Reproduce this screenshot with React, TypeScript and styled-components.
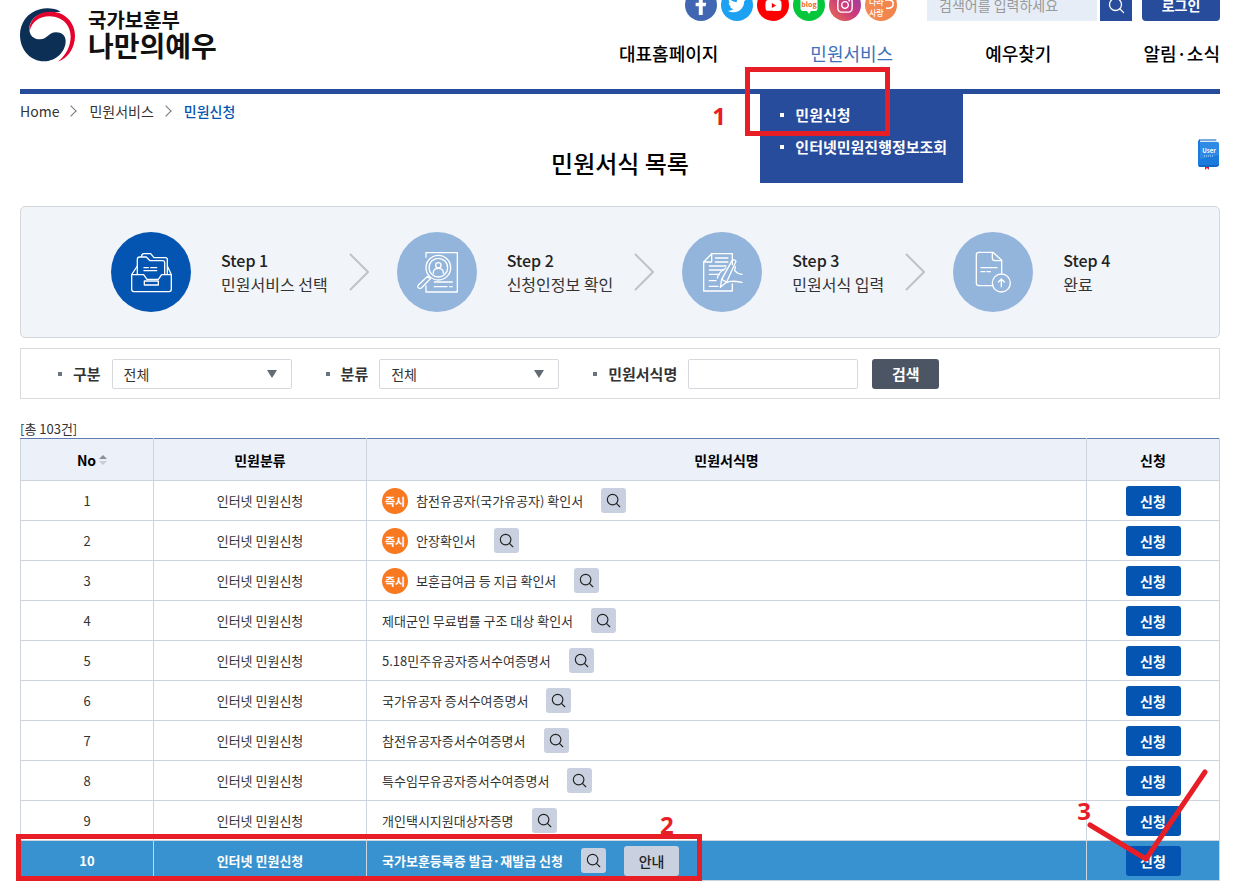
import React from "react";
import styled, { createGlobalStyle, css } from "styled-components";
import { FaFacebookF, FaTwitter, FaYoutube, FaInstagram } from "react-icons/fa";

const color = {
  brand: "#274c9b",
  action: "#0455b1",
  soft: "#93b4db",
  line: "#cdd4dd",
  text: "#333",
  mark: "#e81e26",
  chip: "#c9d0df",
};

const GlobalStyle = createGlobalStyle`
  *, *::before, *::after { box-sizing: border-box; }
  body {
    margin: 0;
    background: #fff;
    color: ${color.text};
    font-family: "Noto Sans CJK KR", "Noto Sans", sans-serif;
    font-size: 14px;
    line-height: 20px;
  }
  button, input, select { font: inherit; color: inherit; margin: 0; padding: 0; }
  button { border: 0; cursor: pointer; }
  a { color: inherit; text-decoration: none; }
  ul, ol { list-style: none; margin: 0; padding: 0; }
  svg { display: block; }
`;

const Page = styled.div`
  padding: 0 18px 0 20px;
`;

/* ---------- header ---------- */

const Header = styled.header`
  display: flex;
  justify-content: space-between;
  height: 94px;
  border-bottom: 5px solid ${color.brand};
`;

const Logo = styled.a`
  display: flex;
  align-items: flex-start;
  gap: 13px;
  padding-top: 8px;
  color: #111;
  font-weight: 700;
`;

const LogoText = styled.span`
  display: flex;
  flex-direction: column;
  font-size: 28px;
  line-height: 26px;
  small {
    font-size: 20px;
    line-height: 24px;
  }
`;

const HeaderSide = styled.div`
  display: flex;
  flex-direction: column;
  align-items: flex-end;
`;

const TopBar = styled.div`
  display: flex;
  align-items: flex-end;
  height: 21px;
  overflow: hidden;
`;

const SocialList = styled.ul`
  display: flex;
  gap: 4px;
  margin-right: 30px;
`;

const SocialLink = styled.a<{ $bg: string }>`
  display: grid;
  place-items: center;
  width: 32px;
  height: 32px;
  border-radius: 50%;
  background: ${(p) => p.$bg};
  color: #fff;
`;

const SearchForm = styled.form`
  display: flex;
  gap: 3px;
  margin-right: 10px;
`;

const SearchInput = styled.input`
  width: 170px;
  height: 32px;
  padding: 0 12px;
  border: 0;
  background: #e6edf6;
  &::placeholder { color: #999; opacity: 1; }
`;

const SearchButton = styled.button`
  display: grid;
  place-items: center;
  width: 32px;
  height: 32px;
  background: ${color.brand};
  color: #fff;
`;

const LoginButton = styled.button`
  width: 78px;
  height: 32px;
  border-radius: 4px;
  background: ${color.brand};
  color: #fff;
  font-weight: 700;
`;

const Nav = styled.nav`
  margin-top: 19px;
`;

const NavList = styled.ul`
  display: flex;
  gap: 92px;
  font-size: 18px;
  line-height: 26px;
  font-weight: 500;
  color: #000;
`;

const NavItem = styled.li<{ $active?: boolean }>`
  position: relative;
  white-space: nowrap;
  ${(p) => p.$active && css`> a { color: #3d71b8; font-weight: 400; }`}
`;

const SubMenu = styled.ul`
  position: absolute;
  z-index: 1;
  top: 54px;
  left: -50px;
  width: 203px;
  padding: 5px 0 20px 20px;
  background: ${color.brand};
  color: #fff;
  font-size: 15px;
  line-height: 32px;
  font-weight: 700;
  li {
    display: flex;
    align-items: center;
    gap: 11px;
  }
  li::before {
    content: "";
    width: 4px;
    height: 4px;
    background: #fff;
  }
`;

/* ---------- guide marks drawn over the page ---------- */

const MarkBox = styled.div<{ $w: number; $h: number }>`
  position: absolute;
  z-index: 2;
  width: ${(p) => p.$w}px;
  height: ${(p) => p.$h}px;
  border: 5px solid ${color.mark};
  pointer-events: none;
`;

const NavMark = styled(MarkBox)`
  top: 27px;
  left: -65px;
`;

const RowMark = styled(MarkBox)`
  bottom: 0;
  left: -4px;
`;

const MarkNumber = styled.span`
  position: absolute;
  z-index: 2;
  color: ${color.mark};
  font-family: "Noto Sans", sans-serif;
  font-size: 24px;
  line-height: 24px;
  font-weight: 700;
`;

const NavNumber = styled(MarkNumber)`
  top: 64px;
  left: -98px;
`;

const RowNumber = styled(MarkNumber)`
  bottom: 44px;
  left: 640px;
`;

const ApplyNumber = styled(MarkNumber)`
  bottom: 58px;
  right: 129px;
`;

const CheckMark = styled.svg`
  position: absolute;
  z-index: 2;
  right: 11px;
  bottom: 18px;
  pointer-events: none;
`;

/* ---------- breadcrumb and title ---------- */

const Breadcrumb = styled.ol`
  display: flex;
  align-items: center;
  padding-top: 7px;
  li { display: flex; align-items: center; }
  li + li::before {
    content: "";
    width: 8px;
    height: 8px;
    margin: 0 14px 0 8px;
    border: solid #777;
    border-width: 1px 1px 0 0;
    transform: rotate(45deg);
  }
  [aria-current] { color: ${color.action}; font-weight: 500; }
`;

const TitleRow = styled.div`
  display: grid;
  grid-template-columns: 1fr auto 1fr;
  align-items: center;
  height: 48px;
  margin: 18px 0 19px;
`;

const Title = styled.h1`
  grid-column: 2;
  margin: 0;
  color: #000;
  font-size: 24px;
  line-height: 36px;
  font-weight: 500;
`;

const ManualLink = styled.a`
  justify-self: end;
  align-self: start;
`;

/* ---------- steps ---------- */

const Steps = styled.ol`
  display: flex;
  align-items: center;
  padding: 25px 90px;
  border: 1px solid #d3d7da;
  border-radius: 5px;
  background: #f1f4f8;
`;

const Step = styled.li`
  display: flex;
  align-items: center;
  white-space: nowrap;
`;

const StepIcon = styled.span<{ $on?: boolean }>`
  width: 80px;
  height: 80px;
  margin-right: 30px;
  border-radius: 50%;
  background: ${(p) => (p.$on ? color.action : color.soft)};
`;

const StepText = styled.span`
  display: flex;
  flex-direction: column;
  font-size: 16px;
  line-height: 24px;
  strong { font-weight: 500; color: #222; }
`;

const StepArrow = styled.svg`
  margin: 0 28px 0 21px;
`;

/* ---------- filter ---------- */

const Filter = styled.form`
  display: flex;
  align-items: center;
  margin-top: 10px;
  padding: 10px 37px 9px;
  border: 1px solid #d8dcdf;
`;

const FilterLabel = styled.label`
  display: flex;
  align-items: center;
  gap: 11px;
  margin-right: 11px;
  font-size: 15px;
  font-weight: 700;
  &::before {
    content: "";
    width: 4px;
    height: 4px;
    background: #6b737c;
  }
`;

const SelectBox = styled.span`
  position: relative;
  margin-right: 34px;
  &::after {
    content: "";
    position: absolute;
    top: 11px;
    right: 15px;
    border: solid transparent;
    border-width: 8px 5px 0;
    border-top-color: #626a73;
    pointer-events: none;
  }
`;

const field = css`
  height: 30px;
  padding: 0 11px;
  border: 1px solid #d5d9dd;
  border-radius: 2px;
  background: #fff;
`;

const Select = styled.select`
  ${field}
  display: block;
  width: 180px;
  appearance: none;
`;

const TextInput = styled.input`
  ${field}
  width: 170px;
`;

const FilterButton = styled.button`
  width: 67px;
  height: 30px;
  margin-left: 14px;
  border-radius: 3px;
  background: #4c5563;
  color: #fff;
  font-size: 15px;
  font-weight: 700;
`;

/* ---------- table ---------- */

const Total = styled.p`
  margin: 20px 0 0;
  font-size: 13px;
  line-height: 19px;
`;

const TableWrap = styled.div`
  position: relative;
`;

const Table = styled.table`
  width: 100%;
  table-layout: fixed;
  border-collapse: collapse;
  font-size: 13px;
  text-align: center;
`;

const HeadCell = styled.th`
  height: 42px;
  padding: 0;
  border: 1px solid ${color.line};
  border-top-color: #5f7db0;
  background: #ebf0f9;
  color: #000;
  font-size: 14px;
  font-weight: 700;
`;

const SortButton = styled.button`
  display: inline-flex;
  align-items: center;
  gap: 3px;
  padding-left: 10px;
  background: none;
`;

const Row = styled.tr<{ $active?: boolean }>`
  ${(p) =>
    p.$active &&
    css`
      background: #3892cf;
      color: #fff;
      font-weight: 700;
    `}
`;

const Cell = styled.td`
  height: 40px;
  padding: 0;
  border: 1px solid ${color.line};
`;

const NameCell = styled(Cell)`
  padding-left: 15px;
`;

const NameLine = styled.div`
  display: flex;
  align-items: center;
`;

const Badge = styled.span`
  width: 26px;
  height: 26px;
  margin-right: 8px;
  border-radius: 50%;
  background: #f8791f;
  color: #fff;
  font-size: 11px;
  line-height: 26px;
  font-weight: 700;
  text-align: center;
`;

const ViewButton = styled.button`
  display: grid;
  place-items: center;
  width: 25px;
  height: 25px;
  margin-left: 18px;
  border-radius: 3px;
  background: ${color.chip};
  color: #222;
`;

const RowButton = styled.button<{ $plain?: boolean }>`
  width: 55px;
  height: 30px;
  border-radius: 3px;
  background: ${(p) => (p.$plain ? color.chip : color.action)};
  color: ${(p) => (p.$plain ? "#222" : "#fff")};
  font-size: 14px;
  font-weight: ${(p) => (p.$plain ? 500 : 700)};
  ${(p) => p.$plain && css`margin-left: 18px;`}
`;

/* ---------- drawings ---------- */

const Emblem = () => (
  <svg width="55" height="54" viewBox="0 0 165 160" aria-hidden="true">
    <path
      fill="#0c2f55"
      d="M122 10C104-1 78-2 60 3C22 12 0 45 0 80C0 125 32 159 72 159C108 159 137 130 137 98C137 82 125 72 108 72C86 72 82 93 60 93C42 93 28 82 28 62C28 38 45 20 72 14C90 10 108 12 122 10Z"
    />
    <path
      fill="#e4032e"
      d="M29 68C26 38 50 11 88 10C132 8 165 40 165 82C165 118 145 148 114 160C140 140 152 112 152 84C152 50 126 25 90 24C62 23 36 38 29 68Z"
    />
  </svg>
);

const Magnifier = ({ size = 17 }: { size?: number }) => (
  <svg
    width={size}
    height={size}
    viewBox="0 0 17 17"
    fill="none"
    stroke="currentColor"
    strokeWidth="1.3"
    strokeLinecap="round"
    aria-hidden="true"
  >
    <circle cx="7.5" cy="7.5" r="6" />
    <path d="M11.8 11.8L15.6 15.6" />
  </svg>
);

const BlogIcon = () => (
  <svg width="32" height="32" viewBox="0 0 32 32" aria-hidden="true">
    <path
      fill="#fff"
      d="M10 9h12q2.500 0 2.500 2.500v8q0 2.500-2.500 2.500h-4l-2 3l-2-3h-4q-2.500 0-2.500-2.500v-8q0-2.500 2.500-2.500z"
    />
    <text x="16" y="18" textAnchor="middle" fontSize="7" fontWeight="700" fill="#f0632c">
      blog
    </text>
  </svg>
);

const LoveIcon = () => (
  <svg width="32" height="32" viewBox="0 0 32 32" aria-hidden="true">
    <g fill="#fff" fontSize="8" fontWeight="500">
      <text x="4" y="16">나라</text>
      <text x="4" y="27">사랑</text>
    </g>
    <path d="M20 11h5q4 1 3 5q-1 4-7 3" fill="none" stroke="#fff" strokeWidth="1.5" />
  </svg>
);

const ManualIcon = () => (
  <svg width="22" height="31" viewBox="0 0 22 31" aria-hidden="true">
    <path d="M7 27h4v4l-2-2l-2 2z" fill="#d3222a" />
    <path d="M2 0h17v4H2z" fill="#dbe8f5" />
    <path d="M1 1q0-1 1-1v3h17q2 0 2 2v20q0 3-3 3H2q-2 0-2-2V2z" fill="#1a7bdc" />
    <path d="M2 3h17q2 0 2 2v11L2 20z" fill="#3c95ea" opacity=".6" />
    <path d="M1 2q1-1 2-1h15" stroke="#1a6fc4" fill="none" />
    <path d="M1 27h17q2 0 3-2" stroke="#0d57ab" fill="none" />
    <text x="11" y="14" textAnchor="middle" fontSize="6" fontWeight="700" fill="#fff">
      User
    </text>
    <path d="M6 17h10" stroke="#bcdcf8" strokeDasharray="1 1" />
  </svg>
);

const SortIcon = () => (
  <svg width="8" height="10" viewBox="0 0 8 10" aria-hidden="true">
    <path d="M0 4L4 0L8 4z" fill="#8b9098" />
    <path d="M0 6h8L4 10z" fill="#c9ced6" />
  </svg>
);

const StepDrawing = ({ children }: { children: React.ReactNode }) => (
  <svg
    width="80"
    height="80"
    viewBox="0 0 240 240"
    fill="none"
    stroke="#fff"
    strokeWidth="4"
    strokeLinecap="round"
    strokeLinejoin="round"
    aria-hidden="true"
  >
    {children}
  </svg>
);

const drawings = [
  <>
    <path d="M62 128H98L108 142H142L152 128H181V172q0 7-7 7H69q-7 0-7-7Z" />
    <path d="M63 126L79 102M180 126L169 102" />
    <path d="M79 126V82q0-7 7-7h20l11 11h38q6 0 6 6V126" />
    <path d="M92 73q0-8 7-8h20l10 12h34q6 0 6 6V126" />
    <path d="M99 107h13M119 107h18M99 116h38" />
    <path d="M100 147h42v12h-42z" />
  </>,
  <>
    <path d="M87 76V62H181V180H87V162" />
    <circle cx="124" cy="107" r="37" />
    <circle cx="124" cy="107" r="28" />
    <circle cx="124" cy="100" r="8" />
    <path d="M109 124v-4q2-11 15-11q13 0 15 11v4" />
    <path d="M92 133l-28 26q-4 6 1 9q5 3 9-1l26-27z" />
    <path d="M112 150h54M112 164h38M158 164h8" />
  </>,
  <>
    <path d="M151 98V65H89L65 90V177H151V156" />
    <path d="M65 90H89V65" />
    <path d="M100 78h38M100 90h38M82 102h50M82 114h44M82 127h30M82 146h20M82 163h26" />
    <path d="M115 166L119 142L150 86q7-6 12 2L134 150Z" />
    <path d="M119 142l14 8M106 138q6-20 26-30M160 104l-2 12q8 10 22 11M134 152q10-8 46-1" />
  </>,
  <>
    <path d="M117 161H78q-8 0-8-8V69q0-8 8-8H120L146 85V124" />
    <path d="M118 62V78q0 8 8 8h19" />
    <path d="M84 107h48M84 119h12M102 119h10" />
    <circle cx="145" cy="153" r="27" />
    <path d="M145 164V142M136 150L145 141L154 150" />
  </>,
];

/* ---------- data ---------- */

const social = [
  { name: "페이스북", bg: "#4267b2", icon: <FaFacebookF size={20} /> },
  { name: "트위터", bg: "#1da1f2", icon: <FaTwitter size={18} /> },
  { name: "유튜브", bg: "#f00", icon: <FaYoutube size={17} /> },
  { name: "블로그", bg: "#05c73c", icon: <BlogIcon /> },
  {
    name: "인스타그램",
    bg: "linear-gradient(45deg, #e4704f, #cc3a7c 50%, #8b3fb0)",
    icon: <FaInstagram size={18} />,
  },
  { name: "나라사랑", bg: "linear-gradient(90deg, #f58a52, #f0834c)", icon: <LoveIcon /> },
];

const steps = ["민원서비스 선택", "신청인정보 확인", "민원서식 입력", "완료"];

const forms = [
  { name: "참전유공자(국가유공자) 확인서", instant: true },
  { name: "안장확인서", instant: true },
  { name: "보훈급여금 등 지급 확인서", instant: true },
  { name: "제대군인 무료법률 구조 대상 확인서" },
  { name: "5.18민주유공자증서수여증명서" },
  { name: "국가유공자 증서수여증명서" },
  { name: "참전유공자증서수여증명서" },
  { name: "특수임무유공자증서수여증명서" },
  { name: "개인택시지원대상자증명" },
  { name: "국가보훈등록증 발급·재발급 신청", active: true },
];

export default function App() {
  return (
    <>
      <GlobalStyle />
      <Page>
        <Header>
          <Logo href="#">
            <Emblem />
            <LogoText>
              <small>국가보훈부</small>
              나만의예우
            </LogoText>
          </Logo>
          <HeaderSide>
            <TopBar>
              <SocialList>
                {social.map((s) => (
                  <li key={s.name}>
                    <SocialLink href="#" $bg={s.bg} aria-label={s.name}>
                      {s.icon}
                    </SocialLink>
                  </li>
                ))}
              </SocialList>
              <SearchForm>
                <SearchInput aria-label="검색어" placeholder="검색어를 입력하세요" />
                <SearchButton type="button" aria-label="검색">
                  <Magnifier />
                </SearchButton>
              </SearchForm>
              <LoginButton type="button">로그인</LoginButton>
            </TopBar>
            <Nav>
              <NavList>
                <NavItem><a href="#">대표홈페이지</a></NavItem>
                <NavItem $active>
                  <a href="#">민원서비스</a>
                  <SubMenu>
                    <li><a href="#">민원신청</a></li>
                    <li><a href="#">인터넷민원진행정보조회</a></li>
                  </SubMenu>
                  <NavMark $w={145} $h={69} />
                  <NavNumber>1</NavNumber>
                </NavItem>
                <NavItem><a href="#">예우찾기</a></NavItem>
                <NavItem><a href="#">알림·소식</a></NavItem>
              </NavList>
            </Nav>
          </HeaderSide>
        </Header>

        <main>
          <Breadcrumb>
            <li><a href="#">Home</a></li>
            <li><a href="#">민원서비스</a></li>
            <li><a href="#" aria-current="page">민원신청</a></li>
          </Breadcrumb>

          <TitleRow>
            <Title>민원서식 목록</Title>
            <ManualLink href="#" aria-label="사용자 매뉴얼">
              <ManualIcon />
            </ManualLink>
          </TitleRow>

          <Steps>
            {steps.map((label, i) => (
              <Step key={label}>
                <StepIcon $on={i === 0}>
                  <StepDrawing>{drawings[i]}</StepDrawing>
                </StepIcon>
                <StepText>
                  <strong>Step {i + 1}</strong>
                  {label}
                </StepText>
                {i < steps.length - 1 && (
                  <StepArrow width="20" height="38" fill="none" stroke="#bfc3c8" strokeWidth="2" aria-hidden="true">
                    <path d="M1 1L19 19L1 37" />
                  </StepArrow>
                )}
              </Step>
            ))}
          </Steps>

          <Filter>
            <FilterLabel htmlFor="kind">구분</FilterLabel>
            <SelectBox>
              <Select id="kind"><option>전체</option></Select>
            </SelectBox>
            <FilterLabel htmlFor="group">분류</FilterLabel>
            <SelectBox>
              <Select id="group"><option>전체</option></Select>
            </SelectBox>
            <FilterLabel htmlFor="form-name">민원서식명</FilterLabel>
            <TextInput id="form-name" />
            <FilterButton type="button">검색</FilterButton>
          </Filter>

          <Total>[총 103건]</Total>
          <TableWrap>
            <Table>
              <colgroup>
                <col style={{ width: "133px" }} />
                <col style={{ width: "213px" }} />
                <col />
                <col style={{ width: "133px" }} />
              </colgroup>
              <thead>
                <tr>
                  <HeadCell scope="col">
                    <SortButton type="button">
                      No
                      <SortIcon />
                    </SortButton>
                  </HeadCell>
                  <HeadCell scope="col">민원분류</HeadCell>
                  <HeadCell scope="col">민원서식명</HeadCell>
                  <HeadCell scope="col">신청</HeadCell>
                </tr>
              </thead>
              <tbody>
                {forms.map((f, i) => (
                  <Row key={f.name} $active={f.active}>
                    <Cell>{i + 1}</Cell>
                    <Cell>인터넷 민원신청</Cell>
                    <NameCell>
                      <NameLine>
                        {f.instant && <Badge>즉시</Badge>}
                        {f.name}
                        <ViewButton type="button" aria-label="미리보기">
                          <Magnifier size={15} />
                        </ViewButton>
                        {f.active && <RowButton type="button" $plain>안내</RowButton>}
                      </NameLine>
                    </NameCell>
                    <Cell><RowButton type="button">신청</RowButton></Cell>
                  </Row>
                ))}
              </tbody>
            </Table>
            <RowMark $w={686} $h={47} />
            <RowNumber>2</RowNumber>
            <ApplyNumber>3</ApplyNumber>
            <CheckMark
              width="122"
              height="94"
              viewBox="0 0 122 94"
              fill="none"
              stroke={color.mark}
              strokeWidth="5"
              strokeLinecap="round"
              strokeLinejoin="round"
              aria-hidden="true"
            >
              <path d="M3 56L59 90L118 3" />
            </CheckMark>
          </TableWrap>
        </main>
      </Page>
    </>
  );
}
